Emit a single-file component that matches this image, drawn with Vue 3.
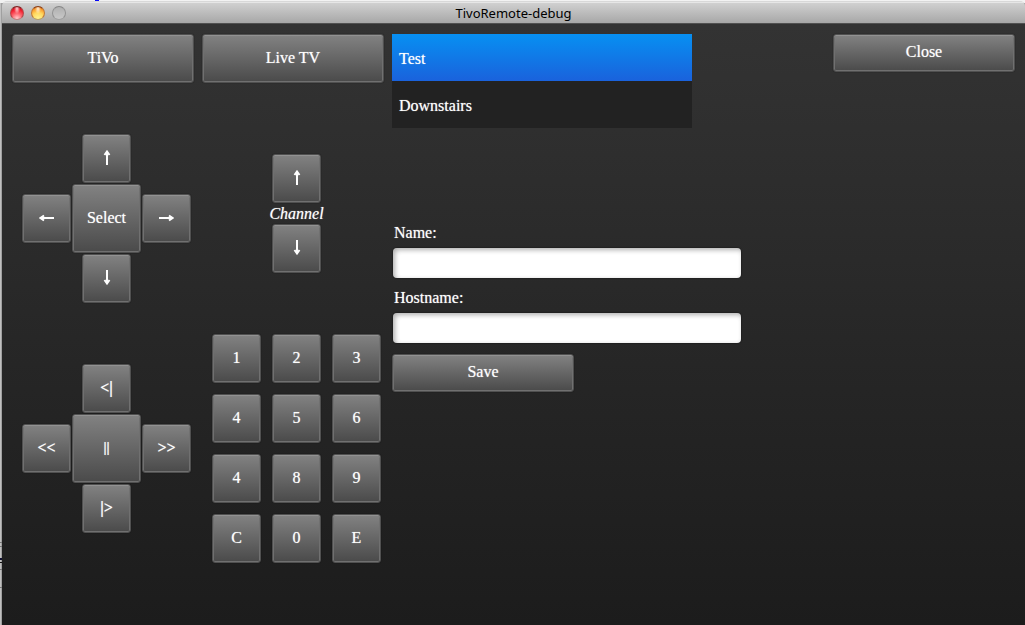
<script setup>
import { ref } from 'vue'

const rooms = ['Test', 'Downstairs']
const selected = ref('Test')
const name = ref('')
const hostname = ref('')
const digits = ['1', '2', '3', '4', '5', '6', '4', '8', '9', 'C', '0', 'E']
const arrows = {
  up: 'M8 15V2M5.5 5L8 1.5L10.5 5',
  down: 'M8 0V13M5.5 10L8 13.5L10.5 10',
  left: 'M15 8H2M5 5.5L1.5 8L5 10.5',
  right: 'M0 8H13M10 5.5L13.5 8L10 10.5',
}
</script>

<template>
  <div class="desktop">
    <div class="window">
      <header class="titlebar">
        <div class="lights">
          <button class="light red" aria-label="Close window"></button>
          <button class="light amber" aria-label="Minimize window"></button>
          <button class="light idle" aria-label="Zoom window" disabled></button>
        </div>
        <h1>TivoRemote-debug</h1>
      </header>

      <main class="remote">
        <section class="column">
          <button class="btn tall">TiVo</button>
          <div class="cross navigation">
            <button v-for="(path, dir) in arrows" :key="dir" class="btn" :class="dir" :aria-label="dir">
              <svg viewBox="0 0 15 15" width="15" height="15"><path :d="path" /></svg>
            </button>
            <button class="btn middle">Select</button>
          </div>
          <div class="cross transport">
            <button class="btn up">&lt;|</button>
            <button class="btn left">&lt;&lt;</button>
            <button class="btn middle">||</button>
            <button class="btn right">&gt;&gt;</button>
            <button class="btn down">|&gt;</button>
          </div>
        </section>

        <section class="column">
          <button class="btn tall">Live TV</button>
          <div class="channel">
            <button class="btn" aria-label="Channel up">
              <svg viewBox="0 0 15 15" width="15" height="15"><path :d="arrows.up" /></svg>
            </button>
            <em>Channel</em>
            <button class="btn" aria-label="Channel down">
              <svg viewBox="0 0 15 15" width="15" height="15"><path :d="arrows.down" /></svg>
            </button>
          </div>
          <div class="keypad">
            <button v-for="(digit, i) in digits" :key="i" class="btn">{{ digit }}</button>
          </div>
        </section>

        <section class="column">
          <ul class="rooms">
            <li v-for="room in rooms" :key="room">
              <button class="room" :class="{ active: room === selected }" @click="selected = room">{{ room }}</button>
            </li>
          </ul>
          <form class="details" @submit.prevent>
            <label for="name">Name:</label>
            <input id="name" v-model="name" type="text" />
            <label for="hostname">Hostname:</label>
            <input id="hostname" v-model="hostname" type="text" />
            <button class="btn wide">Save</button>
          </form>
        </section>

        <button class="btn wide">Close</button>
      </main>
    </div>
  </div>
</template>

<style>
body {
  margin: 0;
}
</style>

<style scoped>
* {
  box-sizing: border-box;
}
.desktop {
  display: flex;
  min-height: 100vh;
  padding: 1px 0 1px 2px;
  background:
    linear-gradient(#0000ff, #2020e0) 95px 0 / 4px 2px no-repeat,
    linear-gradient(#111130, #111130) 0 558px / 2px 2px no-repeat,
    linear-gradient(#111, #111) 0 562px / 2px 1px no-repeat,
    linear-gradient(#777, #777) 0 542px / 2px 1px no-repeat,
    linear-gradient(#777, #777) 0 546px / 2px 1px no-repeat,
    linear-gradient(#777, #777) 0 569px / 2px 1px no-repeat,
    linear-gradient(#777, #777) 0 587px / 2px 1px no-repeat,
    linear-gradient(#777, #777) 0 100% / 100% 1px no-repeat,
    linear-gradient(#f2f2f2, #f2f2f2) 0 0 / 100% 3px no-repeat,
    linear-gradient(90deg, #c0c0c0 1px, #a0a0a0 1px);
  font: 16px/18px "Liberation Serif", "Times New Roman", serif;
  color: #fff;
  text-shadow: 0 0 1px #ffffffa0;
}
.window {
  flex: 1;
  display: flex;
  flex-direction: column;
  border-radius: 5px 5px 0 0;
  overflow: hidden;
}
.titlebar {
  display: grid;
  grid-template-columns: 1fr auto 1fr;
  align-items: center;
  height: 23px;
  padding: 1px 8px 0;
  border-top: 1px solid #d8d8d8;
  border-bottom: 1px solid #515151;
  background: linear-gradient(#d2d2d2, #a7a7a7);
  box-shadow: inset 0 1px #e6e6e6;
  text-shadow: none;
}
h1 {
  margin: 0;
  font: 13px/16px "Noto Sans", "Open Sans", sans-serif;
  color: #000;
}
.lights {
  display: flex;
  gap: 7px;
}
.light {
  width: 14px;
  height: 14px;
  padding: 0;
  border: 1px solid;
  border-radius: 50%;
}
.red {
  border-color: #7c2323 #b04a4a #c08080;
  background:
    radial-gradient(ellipse at 50% 15%, #ffffffd0, #ffffff00 35%),
    radial-gradient(circle at 50% 95%, #ffd0d0, #ff7078 35%, #f01c2c 70%, #a01018);
}
.amber {
  border-color: #8a3c12 #c07a38 #b8a068;
  background:
    radial-gradient(ellipse at 50% 15%, #ffffffd0, #ffffff00 35%),
    radial-gradient(circle at 50% 95%, #fff590, #ffd860 45%, #fa9a2c 75%, #b85410);
}
.idle {
  border-color: #858585 #929292 #a0a0a0;
  background: linear-gradient(#b0b0b0, #c8c8c8);
}
.remote {
  flex: 1;
  display: grid;
  grid-template-columns: 182px 182px minmax(0, 1fr) 182px;
  align-items: start;
  gap: 8px;
  padding: 10px 10px 62px;
  background: linear-gradient(#333, #1c1c1c);
}
.column {
  display: flex;
  flex-direction: column;
}
.btn {
  display: flex;
  align-items: center;
  justify-content: center;
  min-width: 0;
  height: 49px;
  padding: 0 0 2px;
  border: 1px solid #505050;
  border-radius: 3px;
  background: linear-gradient(#828282, #4a4a4a);
  box-shadow: inset 0 1px #929292, inset 0 0 0 1px #707070, 0 0 1px #101010;
  font: inherit;
  color: inherit;
  text-shadow: inherit;
}
.btn svg {
  fill: none;
  stroke: #fff;
  stroke-width: 2;
}
.wide {
  width: 182px;
  height: 38px;
}
.cross {
  display: grid;
  grid-template: ". up ." 49px "left middle right" 69px ". down ." 49px / 49px 69px 49px;
  gap: 1px;
  place-items: center;
  margin-left: 10px;
}
.cross .btn {
  width: 49px;
}
.cross .middle {
  grid-area: middle;
  width: 69px;
  height: 69px;
}
.transport .btn {
  font-weight: bold;
}
.transport .middle {
  font-size: 14px;
}
.up {
  grid-area: up;
}
.left {
  grid-area: left;
}
.right {
  grid-area: right;
}
.down {
  grid-area: down;
}
.navigation {
  margin-top: 51px;
}
.transport {
  margin-top: 61px;
}
.channel {
  display: flex;
  flex-direction: column;
  align-items: center;
  margin: 71px 0 61px 7px;
}
.channel .btn {
  width: 49px;
}
.channel em {
  line-height: 21px;
}
.keypad {
  display: grid;
  grid-template-columns: repeat(3, 49px);
  gap: 11px;
  margin-left: 10px;
}
.rooms {
  width: 300px;
  max-width: 100%;
  margin: 0;
  padding: 0;
  list-style: none;
}
.room {
  display: block;
  width: 100%;
  height: 47px;
  padding: 2px 7px 0;
  border: 0;
  background: #222;
  font: inherit;
  color: inherit;
  text-align: left;
  text-shadow: inherit;
}
.room.active {
  background: linear-gradient(#0790f2, #1a62dc);
}
.details {
  display: flex;
  flex-direction: column;
  align-items: flex-start;
  margin-top: 96px;
}
.details label {
  margin: 0 2px 6px;
}
.details input {
  width: 348px;
  max-width: 100%;
  height: 30px;
  margin: 0 1px 11px;
  padding: 0 6px;
  border: 0;
  border-radius: 4px;
  background: #fff;
  box-shadow: inset 2px 2px 5px #00000050, 0 0 1px 1px #1a1a1a80;
  font: inherit;
  color: #000;
}
</style>
